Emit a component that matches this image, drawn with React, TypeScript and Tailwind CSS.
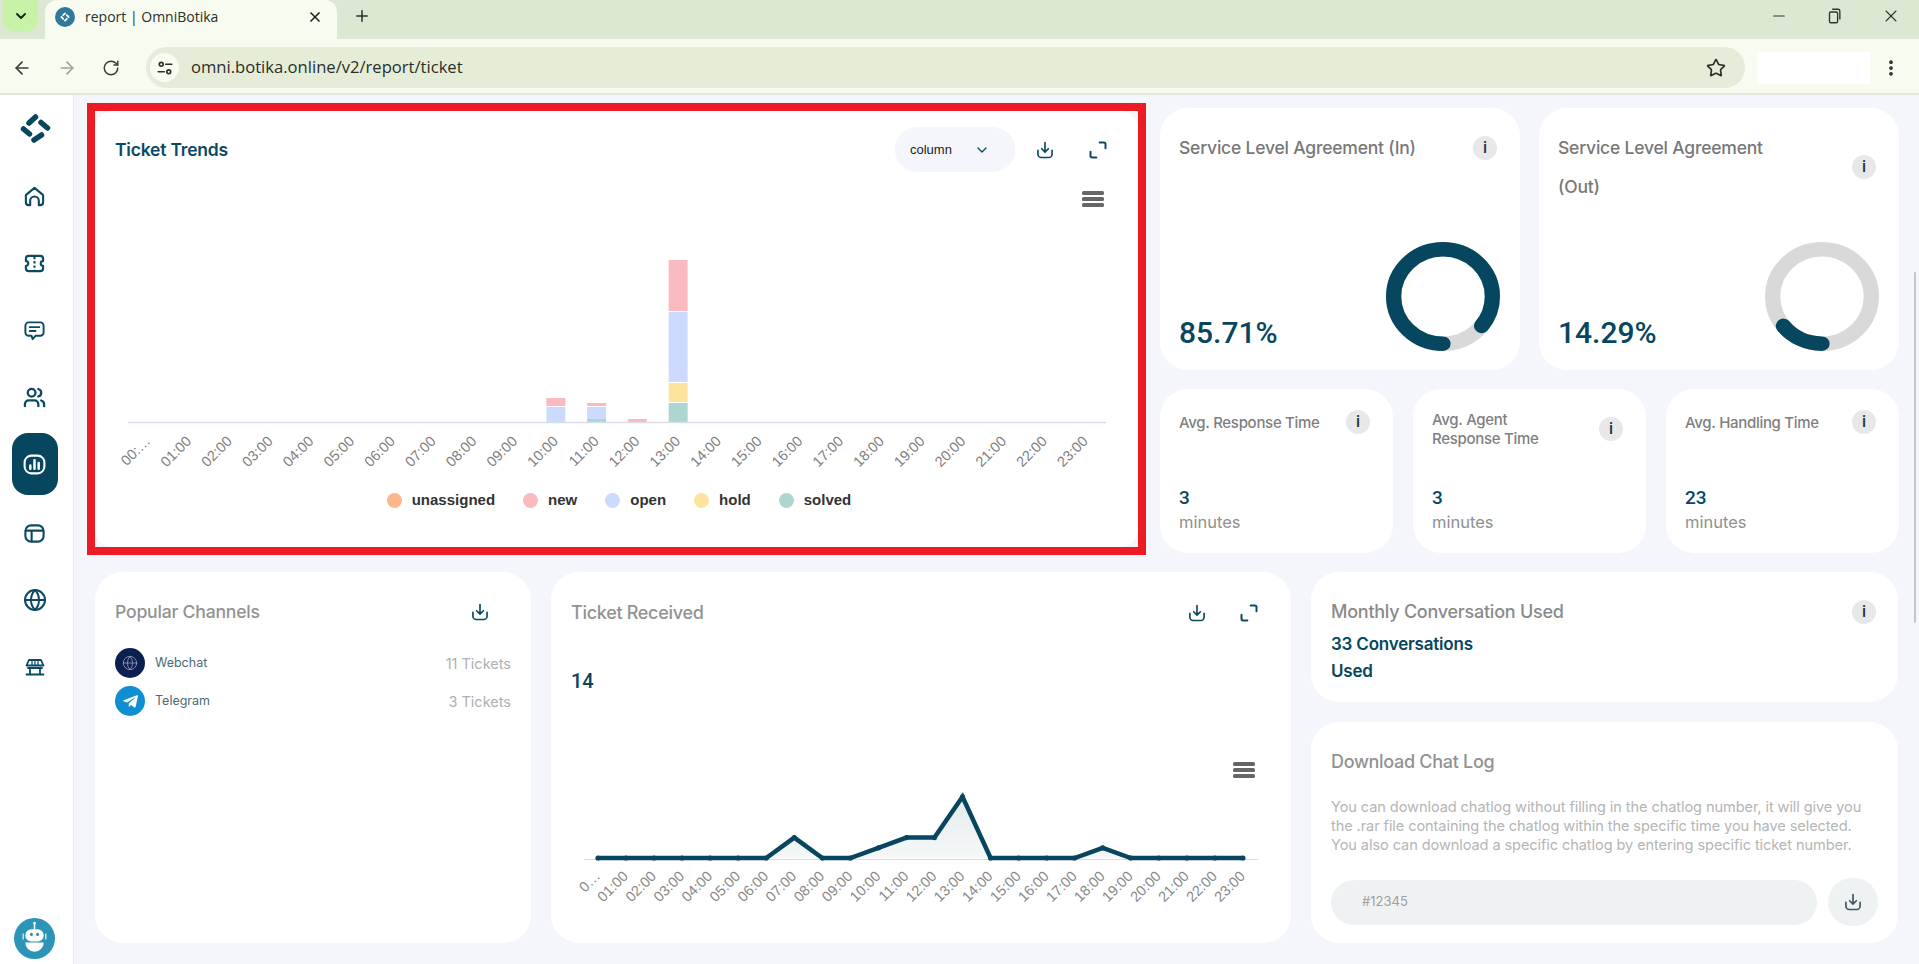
import { ChevronDown, Minus, Plus, X, ArrowLeft, ArrowRight, RotateCw, Star, EllipsisVertical, Users, Globe } from 'lucide-react';
import { FaTelegramPlane } from 'react-icons/fa';

const hours = Array.from({ length: 24 }, (_, i) => `${String(i).padStart(2, '0')}:00`);

const stacks: Record<number, { y: number; h: number; c: string }[]> = {
  10: [
    { y: 226, h: 8, c: '#f8b9c1' },
    { y: 235, h: 15, c: '#ccdaff' },
  ],
  11: [
    { y: 231, h: 3, c: '#f8b9c1' },
    { y: 235, h: 12, c: '#ccdaff' },
    { y: 247, h: 3, c: '#aed6d0' },
  ],
  12: [{ y: 247, h: 3, c: '#f8b9c1' }],
  13: [
    { y: 88, h: 51, c: '#fbb9c0' },
    { y: 140, h: 70, c: '#ccdaff' },
    { y: 211, h: 19, c: '#fde49c' },
    { y: 231, h: 19, c: '#aed6d0' },
  ],
};

const legend = [
  { name: 'unassigned', color: 'bg-[#fdb78d]' },
  { name: 'new', color: 'bg-[#fbb9c0]' },
  { name: 'open', color: 'bg-[#ccdaff]' },
  { name: 'hold', color: 'bg-[#fde49c]' },
  { name: 'solved', color: 'bg-[#aed6d0]' },
];

const received = [0, 0, 0, 0, 0, 0, 0, 2, 0, 0, 1, 2, 2, 6, 0, 0, 0, 0, 1, 0, 0, 0, 0, 0];

function DownloadIcon({ className = 'w-5 h-5 text-[#0b4a63]' }: { className?: string }) {
  return (
    <svg viewBox="0 0 24 24" fill="none" stroke="currentColor" strokeWidth="2" strokeLinecap="round" strokeLinejoin="round" className={className}>
      <path d="M12 3v11M8 10.500l4 4 4-4" />
      <path d="M3.500 12.500V17a4 4 0 0 0 4 4h9a4 4 0 0 0 4-4v-4.500" />
    </svg>
  );
}

function ExpandIcon() {
  return (
    <svg viewBox="0 0 24 24" fill="none" stroke="currentColor" strokeWidth="2.4" strokeLinecap="round" strokeLinejoin="round" className="w-5 h-5 text-[#0b4a63]">
      <path d="M14 3h5a2 2 0 0 1 2 2v5" />
      <path d="M3 14v5a2 2 0 0 0 2 2h5" />
    </svg>
  );
}

function Info() {
  return (
    <div className="w-6 h-6 shrink-0 rounded-full bg-[#e8e8ea] flex items-center justify-center text-[16px] font-medium text-[#1f3440] [font-family:Roboto,sans-serif]">
      i
    </div>
  );
}

function Donut({ value }: { value: number }) {
  return (
    <svg width="114" height="109" viewBox="0 0 112 112" preserveAspectRatio="none" className="shrink-0">
      <circle cx="56" cy="56" r="48.5" fill="none" stroke="#d9d9d9" strokeWidth="15" />
      <circle
        cx="56"
        cy="56"
        r="48.5"
        fill="none"
        stroke="#07465f"
        strokeWidth="15"
        strokeLinecap="round"
        pathLength={100}
        strokeDasharray={`${value} 100`}
        transform="rotate(90 56 56)"
      />
    </svg>
  );
}

function SlaCard({ title, value, percent }: { title: React.ReactNode; value: string; percent: number }) {
  return (
    <div className="w-[360px] h-[262px] bg-white rounded-[28px] pt-5 pl-[19px] pr-5 pb-[19px] flex flex-col justify-between">
      <div className="flex items-center justify-between pr-[3px]">
        <div className="text-[17.5px] leading-[39px] font-medium text-[#787878] tracking-[-0.2px]">{title}</div>
        <Info />
      </div>
      <div className="flex items-end justify-between">
        <div className="text-[30px] font-medium text-[#07465f] -mb-[4px] [font-family:Roboto,sans-serif]">{value}</div>
        <Donut value={percent} />
      </div>
    </div>
  );
}

function AvgCard({ title, value }: { title: React.ReactNode; value: string }) {
  return (
    <div className="h-[164px] bg-white rounded-[28px] pl-[19px] pr-5 pt-[21px] flex flex-col">
      <div className="h-[60px]">
        <div className="flex items-start justify-between pr-[3px]">
          <div className="text-[15px] leading-[19px] font-medium text-[#808080] tracking-[-0.3px] min-h-[24px] flex items-center">{title}</div>
          <div className="self-center"><Info /></div>
        </div>
      </div>
      <div className="mt-[14px] text-[19px] leading-[28px] font-medium text-[#07465f] [font-family:Roboto,sans-serif]">{value}</div>
      <div className="text-[16.5px] leading-[21px] text-[#909090]">minutes</div>
    </div>
  );
}

function NavItem({ children, active }: { children: React.ReactNode; active?: boolean }) {
  return (
    <div className={`w-[46px] flex items-center justify-center text-[#0b4a63] ${active ? 'h-[62px] rounded-[16px] bg-[#07465f] text-white' : 'h-[22px]'}`}>
      {children}
    </div>
  );
}

function TrendsChart() {
  return (
    <svg width="1042" height="316" viewBox="0 0 1042 316" className="block">
      <rect x="987" y="19" width="22" height="4" rx="1.5" fill="#666" />
      <rect x="987" y="25" width="22" height="4" rx="1.5" fill="#666" />
      <rect x="987" y="31" width="22" height="4" rx="1.5" fill="#666" />
      {Object.entries(stacks).map(([slot, parts]) =>
        parts.map((p) => (
          <rect key={`${slot}-${p.y}`} x={33 + (Number(slot) + 0.5) * 40.75 - 9.5} y={p.y} width="19" height={p.h} fill={p.c} />
        )),
      )}
      <line x1="33" y1="250.5" x2="1011" y2="250.5" stroke="#d8dde8" strokeWidth="1.5" />
      {hours.map((h, i) => {
        const x = 33 + (i + 0.5) * 40.75 + 3;
        return (
          <text key={h} x={x} y="270" textAnchor="end" transform={`rotate(-45 ${x} 270)`} fontSize="14.5" fill="#808080" fontFamily="'Liberation Sans', sans-serif">
            {i === 0 ? '00:…' : h}
          </text>
        );
      })}
    </svg>
  );
}

function ReceivedChart() {
  // drawn from the card's chart box: x 551 / y 750 in the page
  const px = (i: number) => 47 + i * 28.04;
  const py = (v: number) => 108 - v * 10.2;
  const line = received.map((v, i) => `${px(i)},${py(v)}`).join(' ');
  return (
    <svg width="740" height="170" viewBox="0 0 740 170" className="block">
      <defs>
        <linearGradient id="area" x1="0" y1="0" x2="0" y2="1">
          <stop offset="0" stopColor="#e4ebec" />
          <stop offset="1" stopColor="#f6f8f8" />
        </linearGradient>
      </defs>
      <rect x="682" y="12" width="22" height="4" rx="1.5" fill="#666" />
      <rect x="682" y="18" width="22" height="4" rx="1.5" fill="#666" />
      <rect x="682" y="24" width="22" height="4" rx="1.5" fill="#666" />
      <polygon points={`${px(0)},108 ${line} ${px(23)},108`} fill="url(#area)" />
      <line x1="33" y1="109.5" x2="707" y2="109.5" stroke="#d6daec" strokeWidth="1" />
      <polyline points={line} fill="none" stroke="#07465f" strokeWidth="4.5" strokeLinejoin="miter" />
      {received.map((v, i) => (
        <circle key={hours[i]} cx={px(i)} cy={py(v)} r="2.6" fill="#07465f" />
      ))}
      {hours.map((h, i) => {
        const x = px(i) + 3;
        return (
          <text key={h} x={x} y="127" textAnchor="end" transform={`rotate(-45 ${x} 127)`} fontSize="14.5" fill="#888" fontFamily="'Liberation Sans', sans-serif">
            {i === 0 ? '0…' : h}
          </text>
        );
      })}
    </svg>
  );
}

export default function App() {
  return (
    <div className="relative w-[1919px] h-[964px] overflow-hidden flex flex-col bg-[#f4f6fb] [font-family:Inter,sans-serif]">
      {/* browser chrome */}
      <div className="h-[39px] bg-[#dce8d2] flex items-start [font-family:'Open_Sans',sans-serif]">
        <div className="ml-[3px] w-[35px] h-[32px] rounded-b-[12px] bg-[#c8f2a8] flex items-center justify-center">
          <ChevronDown className="w-4 h-4 text-[#1b2b14]" strokeWidth={3} />
        </div>
        <div className="ml-[7px] w-[292px] h-[39px] bg-[#f7fbf0] rounded-t-[12px] flex items-center pl-[10px] pr-[14px] pb-[6px]">
          <div className="w-5 h-5 rounded-full bg-[#2f7a98] flex items-center justify-center">
            <svg viewBox="0 0 20 20" className="w-3 h-3" fill="none" stroke="#fff" strokeWidth="3" strokeLinecap="round">
              <path d="M7 7l3-3M13 7l3 3M7 13l-3-3M10 16l3-3" />
            </svg>
          </div>
          <span className="ml-[10px] text-[14px] text-[#2a2f28]">report | OmniBotika</span>
          <X className="ml-auto w-4 h-4 text-[#1f241d]" strokeWidth={2.5} />
        </div>
        <Plus className="ml-[16px] mt-[7px] w-[18px] h-[18px] text-[#2a2f28]" strokeWidth={2} />
        <div className="ml-auto flex items-center pt-[6px] pr-[18px] text-[#2f352c]">
          <Minus className="w-[20px] h-[18px]" strokeWidth={1.6} />
          <svg viewBox="0 0 20 20" className="ml-[36px] w-[18px] h-[18px]" fill="none" stroke="currentColor" strokeWidth="1.5">
            <rect x="5" y="5.5" width="9" height="12" rx="1.5" />
            <path d="M8 2.5h6.5A2 2 0 0 1 16.5 4.500V14" />
          </svg>
          <X className="ml-[38px] w-5 h-5" strokeWidth={1.3} />
        </div>
      </div>
      <div className="h-[56px] bg-[#f7fbf0] border-b-2 border-[#e4e6dc] flex items-center pt-[3px] [font-family:'Open_Sans',sans-serif]">
        <ArrowLeft className="ml-[12px] w-5 h-5 text-[#3a4036]" strokeWidth={2} />
        <ArrowRight className="ml-[25px] w-5 h-5 text-[#a0a59a]" strokeWidth={2} />
        <RotateCw className="ml-[25px] w-[18px] h-[18px] text-[#3a4036]" strokeWidth={2} />
        <div className="ml-[26px] w-[1599px] h-[41px] rounded-full bg-[#e5edd9] flex items-center pl-[4px]">
          <div className="w-[29px] h-[29px] rounded-full bg-[#f7fbf0] flex items-center justify-center">
            <svg viewBox="0 0 24 24" className="w-[18px] h-[18px]" fill="none" stroke="#2a2f28" strokeWidth="2.2" strokeLinecap="round">
              <circle cx="7" cy="7" r="2.6" />
              <path d="M13 7h8M3 17h8" />
              <circle cx="17" cy="17" r="2.6" />
            </svg>
          </div>
          <span className="ml-[12px] text-[16.600px] text-[#2a2f28]">omni.botika.online/v2/report/ticket</span>
          <Star className="ml-auto mr-[19px] w-5 h-5 text-[#2a2f28]" strokeWidth={2} />
        </div>
        <div className="ml-[12px] w-[113px] h-[32px] bg-white" />
        <EllipsisVertical className="ml-[11px] w-5 h-5 text-[#2a2f28]" strokeWidth={2.5} />
      </div>

      <div className="flex-1 flex min-h-0">
        {/* sidebar */}
        <div className="w-[74px] shrink-0 bg-white border-r border-[#e9ebf0] flex flex-col items-center relative pt-[9px] pr-[4px]">
          <svg viewBox="0 0 50 50" className="w-[50px] h-[50px]" fill="none" stroke="#07465f" strokeWidth="5.5" strokeLinecap="round">
            <path d="M19 19l6.500-6M31 18.500l6.500 5.500M24 36l7.500-5M13.500 25l6 5" />
          </svg>
          <div className="mt-[31px] flex flex-col items-center gap-[45px]">
            <NavItem>
              <svg viewBox="0 0 24 24" className="w-[23px] h-[23px]" fill="none" stroke="currentColor" strokeWidth="2.2" strokeLinejoin="round">
                <path d="M3.800 9.800 12 3l8.200 6.800c.5.400.8 1 .8 1.600V18a3 3 0 0 1-3 3h-1.500v-4.500a4.500 4.500 0 0 0-9 0V21H6a3 3 0 0 1-3-3v-6.600c0-.6.300-1.200.8-1.600Z" />
              </svg>
            </NavItem>
            <NavItem>
              <svg viewBox="0 0 24 24" className="w-[23px] h-[23px]" fill="none" stroke="currentColor" strokeWidth="2.2" strokeLinejoin="round">
                <path d="M6 4h12a3 3 0 0 1 3 3v2.500a2.500 2.500 0 0 0 0 5V17a3 3 0 0 1-3 3H6a3 3 0 0 1-3-3v-2.500a2.500 2.500 0 0 0 0-5V7a3 3 0 0 1 3-3Z" />
                <path d="M12 5v14" strokeDasharray="2.500 2" />
              </svg>
            </NavItem>
            <NavItem>
              <svg viewBox="0 0 24 24" className="w-[23px] h-[23px]" fill="none" stroke="currentColor" strokeWidth="2" strokeLinejoin="round" strokeLinecap="round">
                <path d="M6 3.500h12a3.500 3.500 0 0 1 3.500 3.500v7a3.500 3.500 0 0 1-3.500 3.500h-5l-3 3.500-1-3.500H6A3.500 3.500 0 0 1 2.500 14V7A3.500 3.500 0 0 1 6 3.500Z" />
                <path d="M7 8.500h10M7 12.500h6" />
              </svg>
            </NavItem>
            <NavItem>
              <Users className="w-[23px] h-[23px]" strokeWidth={2.4} />
            </NavItem>
          </div>
          <div className="mt-[25px] flex flex-col items-center">
            <NavItem active>
              <svg viewBox="0 0 24 24" className="w-[25px] h-[25px]" fill="none" stroke="currentColor" strokeWidth="2" strokeLinecap="round">
                <rect x="2.500" y="3.500" width="19" height="17" rx="6.500" />
                <path d="M8 16v-3M12 16V8M16 16v-5.500" strokeWidth="2.400" />
              </svg>
            </NavItem>
          </div>
          <div className="mt-[27px] flex flex-col items-center gap-[45px]">
            <NavItem>
              <svg viewBox="0 0 24 24" className="w-[23px] h-[23px]" fill="none" stroke="currentColor" strokeWidth="2.2">
                <rect x="2.500" y="3.500" width="19" height="17" rx="6" />
                <path d="M2.500 9h19M9 9v11.500" />
              </svg>
            </NavItem>
            <NavItem>
              <Globe className="w-[24px] h-[24px]" strokeWidth={2} />
            </NavItem>
            <NavItem>
              <svg viewBox="0 0 24 24" className="w-[24px] h-[24px]" fill="none" stroke="currentColor" strokeWidth="1.800" strokeLinecap="round" strokeLinejoin="round">
                <path d="M6 5h12l2.500 5.500h-17L6 5Z" />
                <path d="M9 6v4M12 6v4M15 6v4" strokeWidth="1.200" />
                <path d="M7 13v6M17 13v6M3.500 19.500h17M5 13h14" />
              </svg>
            </NavItem>
          </div>
          <div className="mt-auto mb-[5px] w-[41px] h-[41px] rounded-full bg-[#2b95b8] flex items-center justify-center">
            <svg viewBox="0 0 40 40" className="w-[41px] h-[41px]">
              <path d="M20 5v6" stroke="#fff" strokeWidth="1.500" />
              <circle cx="20" cy="5" r="1.300" fill="#fff" />
              <rect x="11" y="11" width="18" height="12" rx="6" fill="#fff" />
              <circle cx="17" cy="16" r="1.500" fill="#2b95b8" />
              <circle cx="23" cy="16" r="1.500" fill="#2b95b8" />
              <path d="M11 24h18a9 9 0 0 1-18 0Z" fill="#fff" />
              <path d="M9 15v6M31 15v6" stroke="#fff" strokeWidth="1.500" opacity="0.700" />
            </svg>
          </div>
        </div>

        {/* main */}
        <div className="flex-1 min-w-0 pl-[13px] pt-[8px]">
          <div className="flex items-start">
            <div className="w-[1059px] h-[452px] border-[8px] border-[#ed1c24] shrink-0">
              <div className="h-full bg-white rounded-[18px]">
                <div className="flex items-center pl-5 pr-[30px] pt-4">
                  <h2 className="text-[17.5px] font-semibold text-[#0b4a63] tracking-[-0.2px] mt-[2px]">Ticket Trends</h2>
                  <div className="ml-auto w-[120px] h-[45px] rounded-[22px] bg-[#f4f6fb] flex items-center pl-[15px]">
                    <span className="text-[13px] text-[#1c1c1c] [font-family:'Liberation_Sans',sans-serif]">column</span>
                    <ChevronDown className="ml-[22px] w-4 h-4 text-[#0b4a63]" strokeWidth={2} />
                  </div>
                  <div className="ml-5"><DownloadIcon /></div>
                  <div className="ml-[33px]"><ExpandIcon /></div>
                </div>
                <TrendsChart />
                <div className="flex justify-center gap-[28px] pl-[5px]">
                  {legend.map((l) => (
                    <div key={l.name} className="flex items-center gap-[10px] h-6">
                      <span className={`w-[15px] h-[15px] rounded-full ${l.color}`} />
                      <span className="text-[15px] font-bold text-[#333] [font-family:'Liberation_Sans',sans-serif]">{l.name}</span>
                    </div>
                  ))}
                </div>
              </div>
            </div>
            <div className="ml-[14px] mt-[5px] w-[739px] flex flex-col gap-[19px]">
              <div className="flex gap-[19px]">
                <SlaCard title="Service Level Agreement (In)" value="85.71%" percent={85.71} />
                <SlaCard title={<>Service Level Agreement<br />(Out)</>} value="14.29%" percent={14.29} />
              </div>
              <div className="grid grid-cols-3 gap-5">
                <AvgCard title="Avg. Response Time" value="3" />
                <AvgCard title={<>Avg. Agent<br />Response Time</>} value="3" />
                <AvgCard title="Avg. Handling Time" value="23" />
              </div>
            </div>
          </div>

          <div className="ml-2 mt-[17px] flex gap-5">
            <div className="w-[436px] h-[371px] bg-white rounded-[28px] px-5 pt-[27px]">
              <div className="flex items-center justify-between pr-[21px]">
                <h2 className="text-[17.6px] font-medium text-[#929292] tracking-[-0.2px]">Popular Channels</h2>
                <DownloadIcon />
              </div>
              <div className="mt-[23px] flex flex-col gap-2">
                <div className="flex items-center h-[30px]">
                  <div className="w-[30px] h-[30px] rounded-full bg-[#0b1f50] flex items-center justify-center">
                    <Globe className="w-4 h-4 text-[#9aa5bd]" strokeWidth={1.2} />
                  </div>
                  <span className="ml-[10px] text-[12.500px] text-[#4a6a78]">Webchat</span>
                  <span className="ml-auto text-[14.500px] text-[#b0b0b0]">11 Tickets</span>
                </div>
                <div className="flex items-center h-[30px]">
                  <div className="w-[30px] h-[30px] rounded-full bg-[#0f8fd1] flex items-center justify-center">
                    <FaTelegramPlane className="w-[17px] h-[17px] text-white" />
                  </div>
                  <span className="ml-[10px] text-[12.500px] text-[#4a6a78]">Telegram</span>
                  <span className="ml-auto text-[14.500px] text-[#b0b0b0]">3 Tickets</span>
                </div>
              </div>
            </div>

            <div className="w-[740px] h-[371px] bg-white rounded-[28px] pt-[27px]">
              <div className="flex items-center pl-5 pr-[32px]">
                <h2 className="text-[18px] font-medium text-[#929292] tracking-[-0.3px]">Ticket Received</h2>
                <div className="ml-auto"><DownloadIcon /></div>
                <div className="ml-[32px]"><ExpandIcon /></div>
              </div>
              <div className="ml-5 mt-[41px] text-[20px] leading-7 font-medium text-[#07465f] [font-family:Roboto,sans-serif]">14</div>
              <div className="mt-[55px]">
                <ReceivedChart />
              </div>
            </div>

            <div className="w-[587px] flex flex-col gap-5">
              <div className="h-[130px] bg-white rounded-[28px] px-5 pt-[26px]">
                <div className="flex items-center justify-between pr-[2px]">
                  <h2 className="text-[18px] font-medium text-[#8a8a8a] tracking-[-0.25px]">Monthly Conversation Used</h2>
                  <Info />
                </div>
                <div className="mt-[6px] w-[170px] text-[17px] leading-[27px] font-semibold text-[#07465f] tracking-[-0.2px]">33 Conversations Used</div>
              </div>
              <div className="h-[221px] bg-white rounded-[28px] px-5 pt-[26px]">
                <h2 className="text-[18px] font-medium text-[#929292] tracking-[-0.3px]">Download Chat Log</h2>
                <p className="mt-[23px] w-[548px] text-[14.600px] leading-[19px] text-[#b5b5b5] tracking-[-0.1px]">
                  You can download chatlog without filling in the chatlog number, it will give you the .rar file containing the chatlog within the specific time you have selected. You also can download a specific chatlog by entering specific ticket number.
                </p>
                <div className="mt-[23px] flex items-center gap-[11px]">
                  <div className="w-[486px] h-[45px] rounded-full bg-[#eff2f3] flex items-center pl-[31px] text-[13px] text-[#a0a0a0]">#12345</div>
                  <div className="w-[50px] h-[48px] rounded-full bg-[#eff2f3] flex items-center justify-center">
                    <DownloadIcon className="w-5 h-5 text-[#41565f]" />
                  </div>
                </div>
              </div>
            </div>
          </div>
        </div>
      </div>

      {/* page scrollbar thumb */}
      <div className="absolute right-[3px] top-[272px] w-[2px] h-[351px] rounded-full bg-[#c4c6c9]" />
    </div>
  );
}
